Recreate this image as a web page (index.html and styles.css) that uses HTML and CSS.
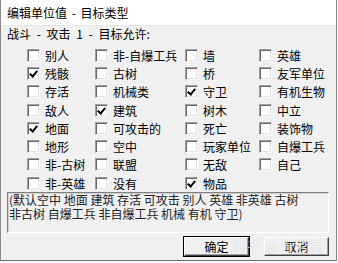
FILE: index.html
```html
<!DOCTYPE html>
<html>
<head>
<meta charset="utf-8">
<link rel="stylesheet" href="styles.css">
</head>
<body>
<div class="window">
  <div class="titlebar">编辑单位值 - 目标类型</div>
  <div class="content">
    <div class="heading">战斗 - 攻击 1 - 目标允许:</div>
    <div class="grid">
      <label class="opt"><span class="box"></span>别人</label>
      <label class="opt"><span class="box"></span>非-自爆工兵</label>
      <label class="opt"><span class="box"></span>墙</label>
      <label class="opt"><span class="box"></span>英雄</label>

      <label class="opt"><span class="box on"></span>残骸</label>
      <label class="opt"><span class="box"></span>古树</label>
      <label class="opt"><span class="box"></span>桥</label>
      <label class="opt"><span class="box"></span>友军单位</label>

      <label class="opt"><span class="box"></span>存活</label>
      <label class="opt"><span class="box"></span>机械类</label>
      <label class="opt"><span class="box on"></span>守卫</label>
      <label class="opt"><span class="box"></span>有机生物</label>

      <label class="opt"><span class="box"></span>敌人</label>
      <label class="opt"><span class="box on"></span>建筑</label>
      <label class="opt"><span class="box"></span>树木</label>
      <label class="opt"><span class="box"></span>中立</label>

      <label class="opt"><span class="box on"></span>地面</label>
      <label class="opt"><span class="box"></span>可攻击的</label>
      <label class="opt"><span class="box"></span>死亡</label>
      <label class="opt"><span class="box"></span>装饰物</label>

      <label class="opt"><span class="box"></span>地形</label>
      <label class="opt"><span class="box"></span>空中</label>
      <label class="opt"><span class="box"></span>玩家单位</label>
      <label class="opt"><span class="box"></span>自爆工兵</label>

      <label class="opt"><span class="box"></span>非-古树</label>
      <label class="opt"><span class="box"></span>联盟</label>
      <label class="opt"><span class="box"></span>无敌</label>
      <label class="opt"><span class="box"></span>自己</label>

      <label class="opt"><span class="box"></span>非-英雄</label>
      <label class="opt"><span class="box"></span>没有</label>
      <label class="opt"><span class="box on"></span>物品</label>
    </div>
    <div class="note">(默认空中 地面 建筑 存活 可攻击 别人 英雄 非英雄 古树 非古树 自爆工兵 非自爆工兵 机械 有机 守卫)</div>
    <div class="buttons">
      <button class="btn default">确定</button>
      <button class="btn">取消</button>
    </div>
  </div>
  <div class="watermark">知乎 @青衫居士</div>
</div>
</body>
</html>
```

FILE: styles.css
```css
* { box-sizing: border-box; }
html, body { margin: 0; padding: 0; background: #ffffff; overflow: hidden; }
body {
  font-family: "Noto Sans CJK SC", "Liberation Sans", sans-serif;
  font-size: 12px;
  color: #000;
}
.window {
  position: relative;
  width: 337px;
  height: 261px;
  overflow: hidden;
  background: #f0f0f0;
  border-left: 1px solid #8a8a8a;
  border-right: 1px solid #8a8a8a;
  border-bottom: 1px solid #6a6a6a;
  display: flex;
  flex-direction: column;
}
.titlebar {
  height: 26px;
  flex: none;
  line-height: 26px;
  background: #ffffff;
  padding-left: 6px;
  font-size: 12px;
  word-spacing: 2px;
  border-bottom: 1px solid #e6e6e6;
}
.content {
  flex: 1;
  min-height: 0;
  display: flex;
  flex-direction: column;
  padding: 0 6px 0 6px;
}
.heading {
  height: 14px;
  line-height: 14px;
  margin-top: 1px;
  word-spacing: 3px;
}
.grid {
  margin-top: 5px;
  display: grid;
  grid-template-columns: 68px 90px 74px 1fr;
  grid-auto-rows: 18.3px;
  padding-left: 20px;
}
.opt {
  display: flex;
  align-items: center;
  gap: 5px;
  white-space: nowrap;
}
.box {
  width: 13px;
  height: 13px;
  flex: none;
  background: #fff;
  border-top: 1px solid #a0a0a0;
  border-left: 1px solid #a0a0a0;
  border-right: 1px solid #f8f8f8;
  border-bottom: 1px solid #f8f8f8;
  box-shadow: inset 1px 1px 0 #696969, inset -1px -1px 0 #e3e3e3;
  position: relative;
}
.box.on::after {
  content: "";
  position: absolute;
  left: 3px;
  top: 1px;
  width: 3px;
  height: 6px;
  border-right: 2px solid #000;
  border-bottom: 2px solid #000;
  transform: rotate(40deg);
}
.note {
  flex: none;
  height: 41px;
  padding: 0 2px 0 1px;
  line-height: 14px;
  color: #222;
  border-top: 1px solid #808080;
  border-left: 1px solid #808080;
  border-right: 1px solid #fff;
  border-bottom: 1px solid #fff;
  box-shadow: inset 1px 1px 0 #d0d0d0;
  word-break: keep-all;
  margin-right: 1px;
}
.buttons {
  flex: none;
  margin-top: 4px;
  display: flex;
  justify-content: flex-end;
  gap: 15px;
  padding-right: 1px;
}
.btn {
  width: 65px;
  height: 19px;
  padding: 0;
  font-family: inherit;
  font-size: 12px;
  line-height: 15px;
  background: #f0f0f0;
  border-top: 1px solid #fff;
  border-left: 1px solid #fff;
  border-right: 1px solid #404040;
  border-bottom: 1px solid #404040;
  box-shadow: inset -1px -1px 0 #a0a0a0;
  color: #000;
}
.btn.default {
  outline: 1px solid #000;
}
.watermark {
  position: absolute;
  left: 232px;
  top: 236px;
  font-size: 14px;
  line-height: 20px;
  color: rgba(255, 255, 255, 0.7);
  letter-spacing: 0.5px;
  text-shadow: 0 0 1px rgba(150,150,150,0.4);
  pointer-events: none;
}
```
